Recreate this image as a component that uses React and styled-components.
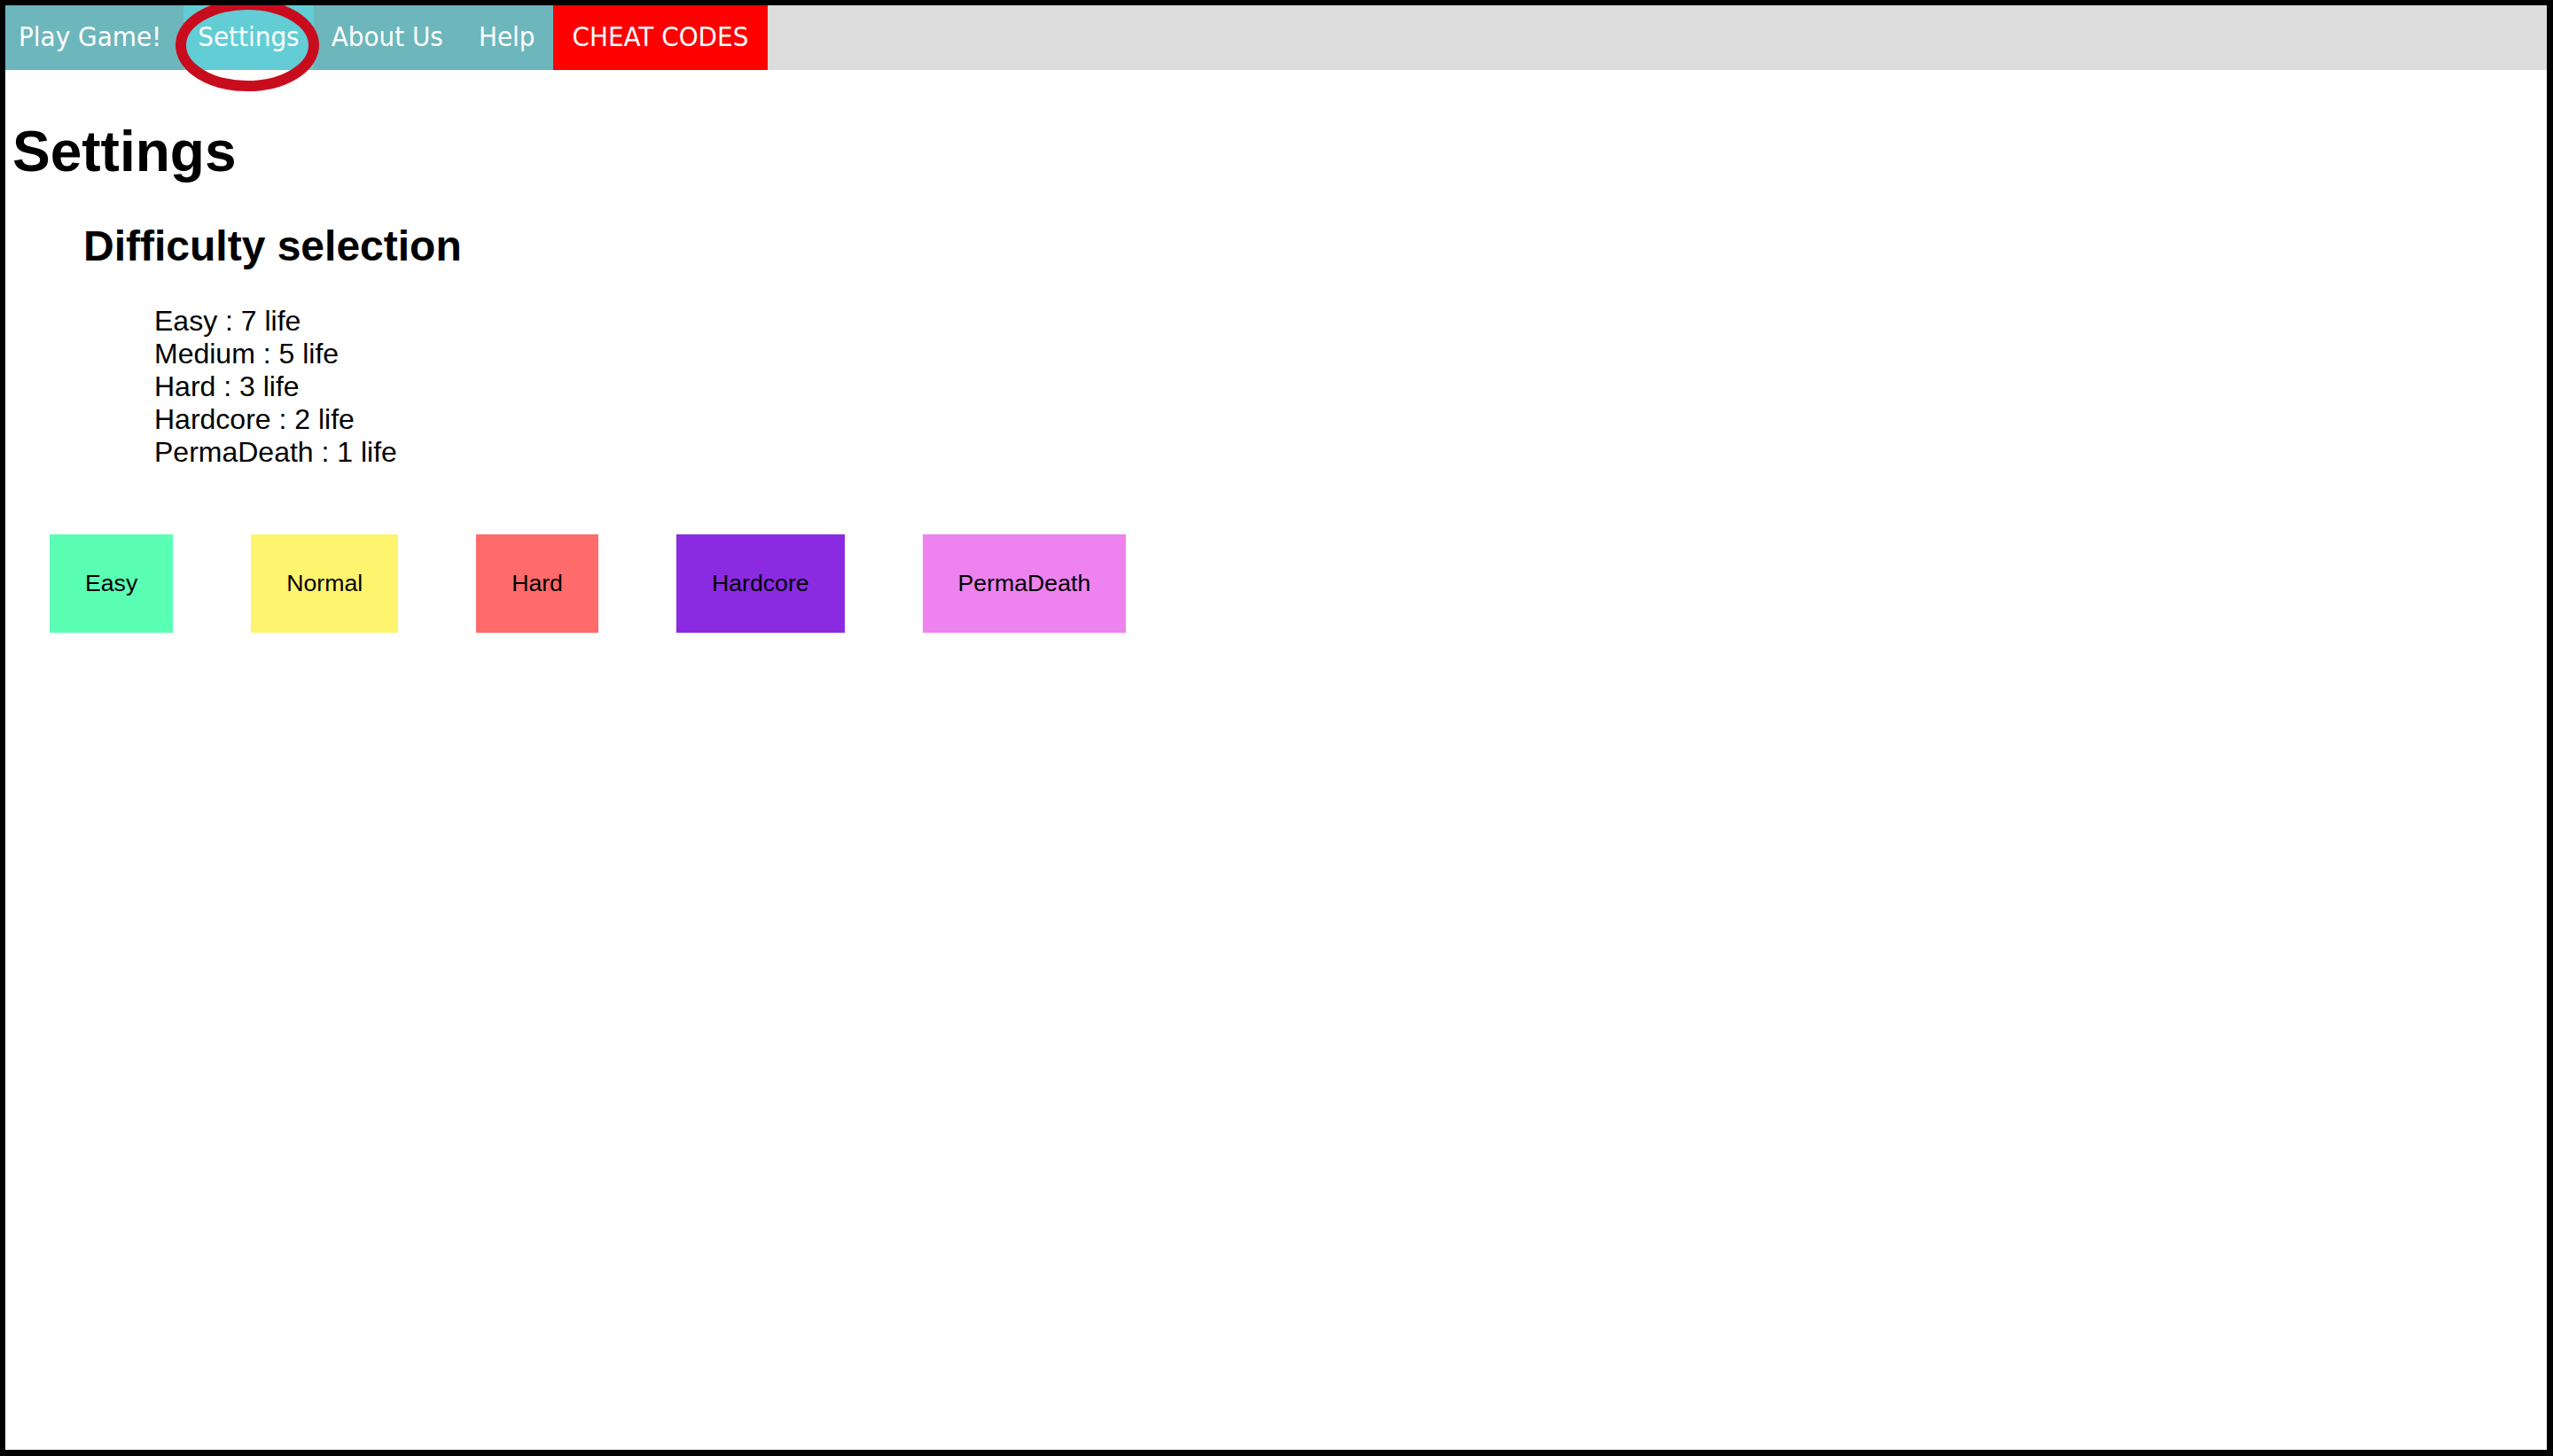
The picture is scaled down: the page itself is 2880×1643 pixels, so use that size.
import styled, { createGlobalStyle } from 'styled-components';

const GlobalStyle = createGlobalStyle`
    html, body {
        margin: 0;
        padding: 0;
    }

    body {
        font-family: "Liberation Sans", Arial, sans-serif;
        color: #000;
        background: #000;
    }
`;

const Frame = styled.div`
    box-sizing: border-box;
    position: relative;
    height: 100vh;
    overflow: hidden;
    background: #fff;
    border-style: solid;
    border-color: #000;
    border-width: 6px 7px 7px 6px;
`;

const NavBar = styled.nav`
    display: flex;
    height: 73px;
    background: #dcdcdc;
`;

const NavLink = styled.a`
    display: flex;
    align-items: center;
    padding: 0 ${(p) => (p.$active ? '16px' : p.$alert ? '22px' : '20px')} 3px;
    font-family: "DejaVu Sans Condensed", "DejaVu Sans", sans-serif;
    font-stretch: condensed;
    font-size: 31px;
    color: #fff;
    text-decoration: none;
    background: ${(p) => (p.$alert ? '#fe0000' : p.$active ? '#62cdd4' : '#6db6bc')};

    &:first-child {
        padding-left: 15px;
        padding-right: 25px;
    }
`;

// hand-drawn red ring around the active tab
const Ring = styled.svg`
    position: absolute;
    top: -10px;
    left: 191px;
    pointer-events: none;
`;

const Title = styled.h1`
    margin: 55px 0 0 8px;
    font-size: 64px;
    font-weight: bold;
`;

const Section = styled.section`
    margin-left: 88px;
`;

const Subtitle = styled.h2`
    margin: 42px 0 0;
    font-size: 48px;
    font-weight: bold;
`;

const LifeList = styled.ul`
    margin: 39px 0 0;
    padding-left: 80px;
    list-style: none;
    font-size: 32px;
`;

const ButtonRow = styled.div`
    display: flex;
    gap: 88px;
    margin-top: 74px;
    padding-left: 50px;
`;

const DifficultyButton = styled.button`
    padding: 40px;
    border: none;
    font-family: "Liberation Sans", Arial, sans-serif;
    font-size: 26.67px;
    color: #000;
    background: ${(p) => p.$color};
    cursor: pointer;
`;

const tabs = [
    { label: 'Play Game!' },
    { label: 'Settings', active: true },
    { label: 'About Us' },
    { label: 'Help' },
    { label: 'CHEAT CODES', alert: true },
];

const lives = [
    ['Easy', 7],
    ['Medium', 5],
    ['Hard', 3],
    ['Hardcore', 2],
    ['PermaDeath', 1],
];

const levels = [
    { label: 'Easy', color: '#5affb4' },
    { label: 'Normal', color: '#fef46e' },
    { label: 'Hard', color: '#ff6b6b' },
    { label: 'Hardcore', color: '#8a2be2' },
    { label: 'PermaDeath', color: '#ee82ee' },
];

const App = () => {
    return (
        <>
            <GlobalStyle />
            <Frame>
                <NavBar>
                    {tabs.map((t) => (
                        <NavLink key={t.label} href="#" $active={t.active} $alert={t.alert}>
                            {t.label}
                        </NavLink>
                    ))}
                </NavBar>
                <Ring width="164" height="108" viewBox="0 0 164 108">
                    <ellipse cx="82" cy="55" rx="75" ry="46" fill="none" stroke="#c80c1e" strokeWidth="12" />
                </Ring>
                <Title>Settings</Title>
                <Section>
                    <Subtitle>Difficulty selection</Subtitle>
                    <LifeList>
                        {lives.map(([name, n]) => (
                            <li key={name}>{name} : {n} life</li>
                        ))}
                    </LifeList>
                </Section>
                <ButtonRow>
                    {levels.map((l) => (
                        <DifficultyButton key={l.label} $color={l.color}>
                            {l.label}
                        </DifficultyButton>
                    ))}
                </ButtonRow>
            </Frame>
        </>
    );
};

export default App;
